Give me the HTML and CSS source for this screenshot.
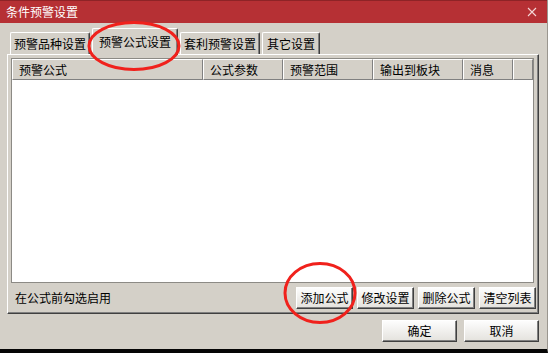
FILE: index.html
```html
<!DOCTYPE html>
<html lang="zh-CN">
<head>
  <meta charset="UTF-8" />
  <title>条件预警设置</title>
  <link rel="stylesheet" href="styles.css">
</head>
<body>
  <div class="window">
    <div class="titlebar">
      <span class="title">条件预警设置</span>
      <svg class="close" width="10" height="10" viewBox="0 0 10 10">
        <path d="M1 1 L9 9 M9 1 L1 9" stroke="#f4d6d6" stroke-width="1.1" fill="none"/>
      </svg>
    </div>

    <div class="tabs">
      <div class="tab t1">预警品种设置</div>
      <div class="tab t2 active">预警公式设置</div>
      <div class="tab t3">套利预警设置</div>
      <div class="tab t4">其它设置</div>
    </div>

    <div class="panel">
      <div class="listview">
        <div class="list-head">
          <div class="col c1">预警公式</div>
          <div class="col c2">公式参数</div>
          <div class="col c3">预警范围</div>
          <div class="col c4">输出到板块</div>
          <div class="col c5">消息</div>
          <div class="col c6"></div>
        </div>
        <div class="list-body"></div>
      </div>
      <div class="panel-foot">
        <span class="hint">在公式前勾选启用</span>
        <div class="btn-row">
          <button class="btn">添加公式</button>
          <button class="btn">修改设置</button>
          <button class="btn">删除公式</button>
          <button class="btn">清空列表</button>
        </div>
      </div>
    </div>

    <div class="dialog-buttons">
      <button class="btn wide">确定</button>
      <button class="btn wide">取消</button>
    </div>

    <!-- red hand-drawn marks over the screenshot -->
    <svg class="mark mark-tab" width="96" height="52" viewBox="0 0 96 52">
      <ellipse cx="48" cy="26" rx="45" ry="23.5" fill="none" stroke="#f0211c" stroke-width="3"/>
    </svg>
    <svg class="mark mark-btn" width="76" height="64" viewBox="0 0 76 64">
      <ellipse cx="38" cy="32" rx="35" ry="29.5" fill="none" stroke="#f0211c" stroke-width="3"/>
    </svg>
  </div>
</body>
</html>
```

FILE: styles.css
```css
* {
  box-sizing: border-box;
}

body {
  margin: 0;
  font-family: "Noto Sans CJK SC", "Liberation Sans", sans-serif;
  font-size: 12px;
  color: #000;
  background: #000;
}

.window {
  position: relative;
  width: 548px;
  height: 353px;
  background-color: #d4d0c8;
  border-right: 1px solid #9a968f;
  border-bottom: 4px solid #050505;
  display: flex;
  flex-direction: column;
  overflow: hidden;
}

.titlebar {
  height: 23px;
  background-color: #b63034;
  color: #fff;
  display: flex;
  align-items: center;
  justify-content: space-between;
  padding: 0 10px 0 6px;
  border-top: 1px solid #8e2326;
}

.title {
  font-size: 12px;
  line-height: 12px;
}

/* tabs */
.tabs {
  display: flex;
  align-items: flex-end;
  height: 31px;
  padding-left: 10px;
  gap: 2px;
  position: relative;
  z-index: 2;
}

.tab {
  height: 22px;
  padding-top: 4px;
  text-align: center;
  line-height: 14px;
  border-top: 1px solid #fff;
  border-left: 1px solid #fff;
  border-right: 1px solid #404040;
  box-shadow: inset -1px 0 0 #808080;
  border-top-left-radius: 2px;
  border-top-right-radius: 2px;
  background-color: #d4d0c8;
}

.t1 { width: 80px; }
.t2 { width: 86px; }
.t3 { width: 80px; }
.t4 { width: 58px; }

.tab.active {
  height: 27px;
  padding-top: 6px;
  margin-bottom: -1px;
}

/* tab page */
.panel {
  margin: 0 8px 0 7px;
  height: 260px;
  border-top: 1px solid #fff;
  border-left: 1px solid #fff;
  border-right: 1px solid #404040;
  border-bottom: 1px solid #404040;
  box-shadow: inset -1px -1px 0 #808080;
  padding: 3px 4px 0 3px;
  display: flex;
  flex-direction: column;
}

.listview {
  height: 226px;
  border: 1px solid #8c8a85;
  background-color: #fff;
  display: flex;
  flex-direction: column;
}

.list-head {
  display: flex;
  height: 21px;
}

.col {
  height: 21px;
  padding-left: 6px;
  line-height: 19px;
  background-color: #d4d0c8;
  border-top: 1px solid #fff;
  border-left: 1px solid #fff;
  border-right: 1px solid #808080;
  border-bottom: 1px solid #808080;
}

.c1 { width: 191px; }
.c2 { width: 80px; }
.c3 { width: 90px; }
.c4 { width: 90px; }
.c5 { width: 50px; }
.c6 { flex: 1; }

.list-body {
  flex: 1;
}

.panel-foot {
  display: flex;
  align-items: center;
  justify-content: space-between;
  height: 30px;
  padding-left: 4px;
}

.hint {
  line-height: 14px;
}

.btn-row {
  display: flex;
  gap: 4px;
  margin-right: -2px;
}

.btn {
  font-family: inherit;
  font-size: 12px;
  color: #000;
  width: 57px;
  height: 22px;
  padding: 0;
  border-top: 1px solid #fff;
  border-left: 1px solid #fff;
  border-right: 1px solid #404040;
  border-bottom: 1px solid #404040;
  box-shadow: inset -1px -1px 0 #808080;
  background: linear-gradient(#fdfdfd, #e4e2dd);
  line-height: 18px;
}

.dialog-buttons {
  display: flex;
  justify-content: flex-end;
  gap: 7px;
  padding: 6px 8px 0 0;
}

.btn.wide {
  width: 75px;
}

/* annotation marks drawn over the dialog */
.mark {
  position: absolute;
  pointer-events: none;
  z-index: 5;
}

.mark-tab {
  left: 86px;
  top: 20px;
}

.mark-btn {
  left: 282px;
  top: 261px;
}
```
